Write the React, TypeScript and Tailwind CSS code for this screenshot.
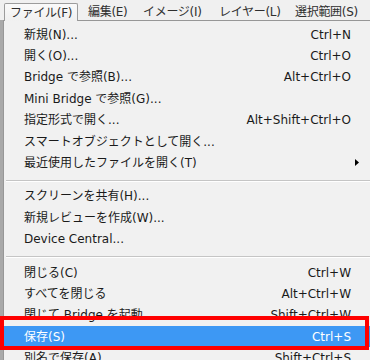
import React from "react";

type Item = {
  label: string;
  shortcut?: string;
  submenu?: boolean;
  active?: boolean;
};

const groups: Item[][] = [
  [
    { label: "新規(N)...", shortcut: "Ctrl+N" },
    { label: "開く(O)...", shortcut: "Ctrl+O" },
    { label: "Bridge で参照(B)...", shortcut: "Alt+Ctrl+O" },
    { label: "Mini Bridge で参照(G)..." },
    { label: "指定形式で開く...", shortcut: "Alt+Shift+Ctrl+O" },
    { label: "スマートオブジェクトとして開く..." },
    { label: "最近使用したファイルを開く(T)", submenu: true },
  ],
  [
    { label: "スクリーンを共有(H)..." },
    { label: "新規レビューを作成(W)..." },
    { label: "Device Central..." },
  ],
  [
    { label: "閉じる(C)", shortcut: "Ctrl+W" },
    { label: "すべてを閉じる", shortcut: "Alt+Ctrl+W" },
    { label: "閉じて Bridge を起動", shortcut: "Shift+Ctrl+W" },
    { label: "保存(S)", shortcut: "Ctrl+S", active: true },
    { label: "別名で保存(A)...", shortcut: "Shift+Ctrl+S" },
  ],
];

const MenuRow = ({ item }: { item: Item }) => (
  <div
    className={`relative flex h-[21.4px] items-center justify-between pl-[20px] pr-[19px] ${
      item.active ? "bg-[#3d98f4] text-white" : "text-[#1a1a1a]"
    }`}
  >
    <span className="whitespace-nowrap">{item.label}</span>
    {item.shortcut && <span className="whitespace-nowrap">{item.shortcut}</span>}
    {item.submenu && (
      <svg
        className="absolute right-[11px] top-[7px]"
        width="4"
        height="7"
        viewBox="0 0 4 7"
      >
        <path d="M0 0 L4 3.5 L0 7 Z" fill="#000" />
      </svg>
    )}
  </div>
);

const Separator = () => (
  <div className="pt-[6px] pb-[4px] pl-[2px]">
    <div className="h-px bg-[#c5c5c5]" />
    <div className="h-px bg-white" />
  </div>
);

export default function App() {
  return (
    <div
      className="relative h-[360px] w-[370px] overflow-hidden bg-[#f0f0f0] text-[12px] leading-none"
      style={{ fontFamily: '"DejaVu Sans", "Noto Sans CJK JP", sans-serif' }}
    >
      {/* menu bar */}
      <div className="flex h-[20px] text-[#2e2e2e]">
        <div className="relative z-10 ml-[4px] mt-[3px] flex h-[18px] w-[74px] items-center rounded-t-[2px] border-x border-t border-[#9c9c9c] bg-gradient-to-b from-[#fafafa] to-[#f0f0f0] pl-[5px] whitespace-nowrap tracking-[-0.3px]">
          ファイル(F)
        </div>
        <div className="flex w-[55px] items-center pl-[10px] pt-[4px] whitespace-nowrap tracking-[-0.3px]">
          編集(E)
        </div>
        <div className="flex w-[76px] items-center pl-[10px] pt-[4px] whitespace-nowrap tracking-[-0.3px]">
          イメージ(I)
        </div>
        <div className="flex w-[76px] items-center pl-[10px] pt-[4px] whitespace-nowrap tracking-[-0.3px]">
          レイヤー(L)
        </div>
        <div className="flex items-center pl-[10px] pt-[4px] whitespace-nowrap tracking-[-0.3px]">
          選択範囲(S)
        </div>
      </div>

      {/* body */}
      <div className="flex">
        <div className="w-[3px] self-stretch bg-[#a9a9a9]" />
        <div className="flex-1 border-l border-t border-[#979797] bg-[#f1f1f1] pt-[3px]">
          {groups.map((g, i) => (
            <div key={i}>
              {i > 0 && <Separator />}
              {g.map((item) => (
                <MenuRow key={item.label} item={item} />
              ))}
            </div>
          ))}
        </div>
      </div>

      {/* red highlight frame */}
      <div className="absolute left-0 top-[316px] h-[34px] w-[369px] border-[4px] border-[#ff0000]" />
    </div>
  );
}
